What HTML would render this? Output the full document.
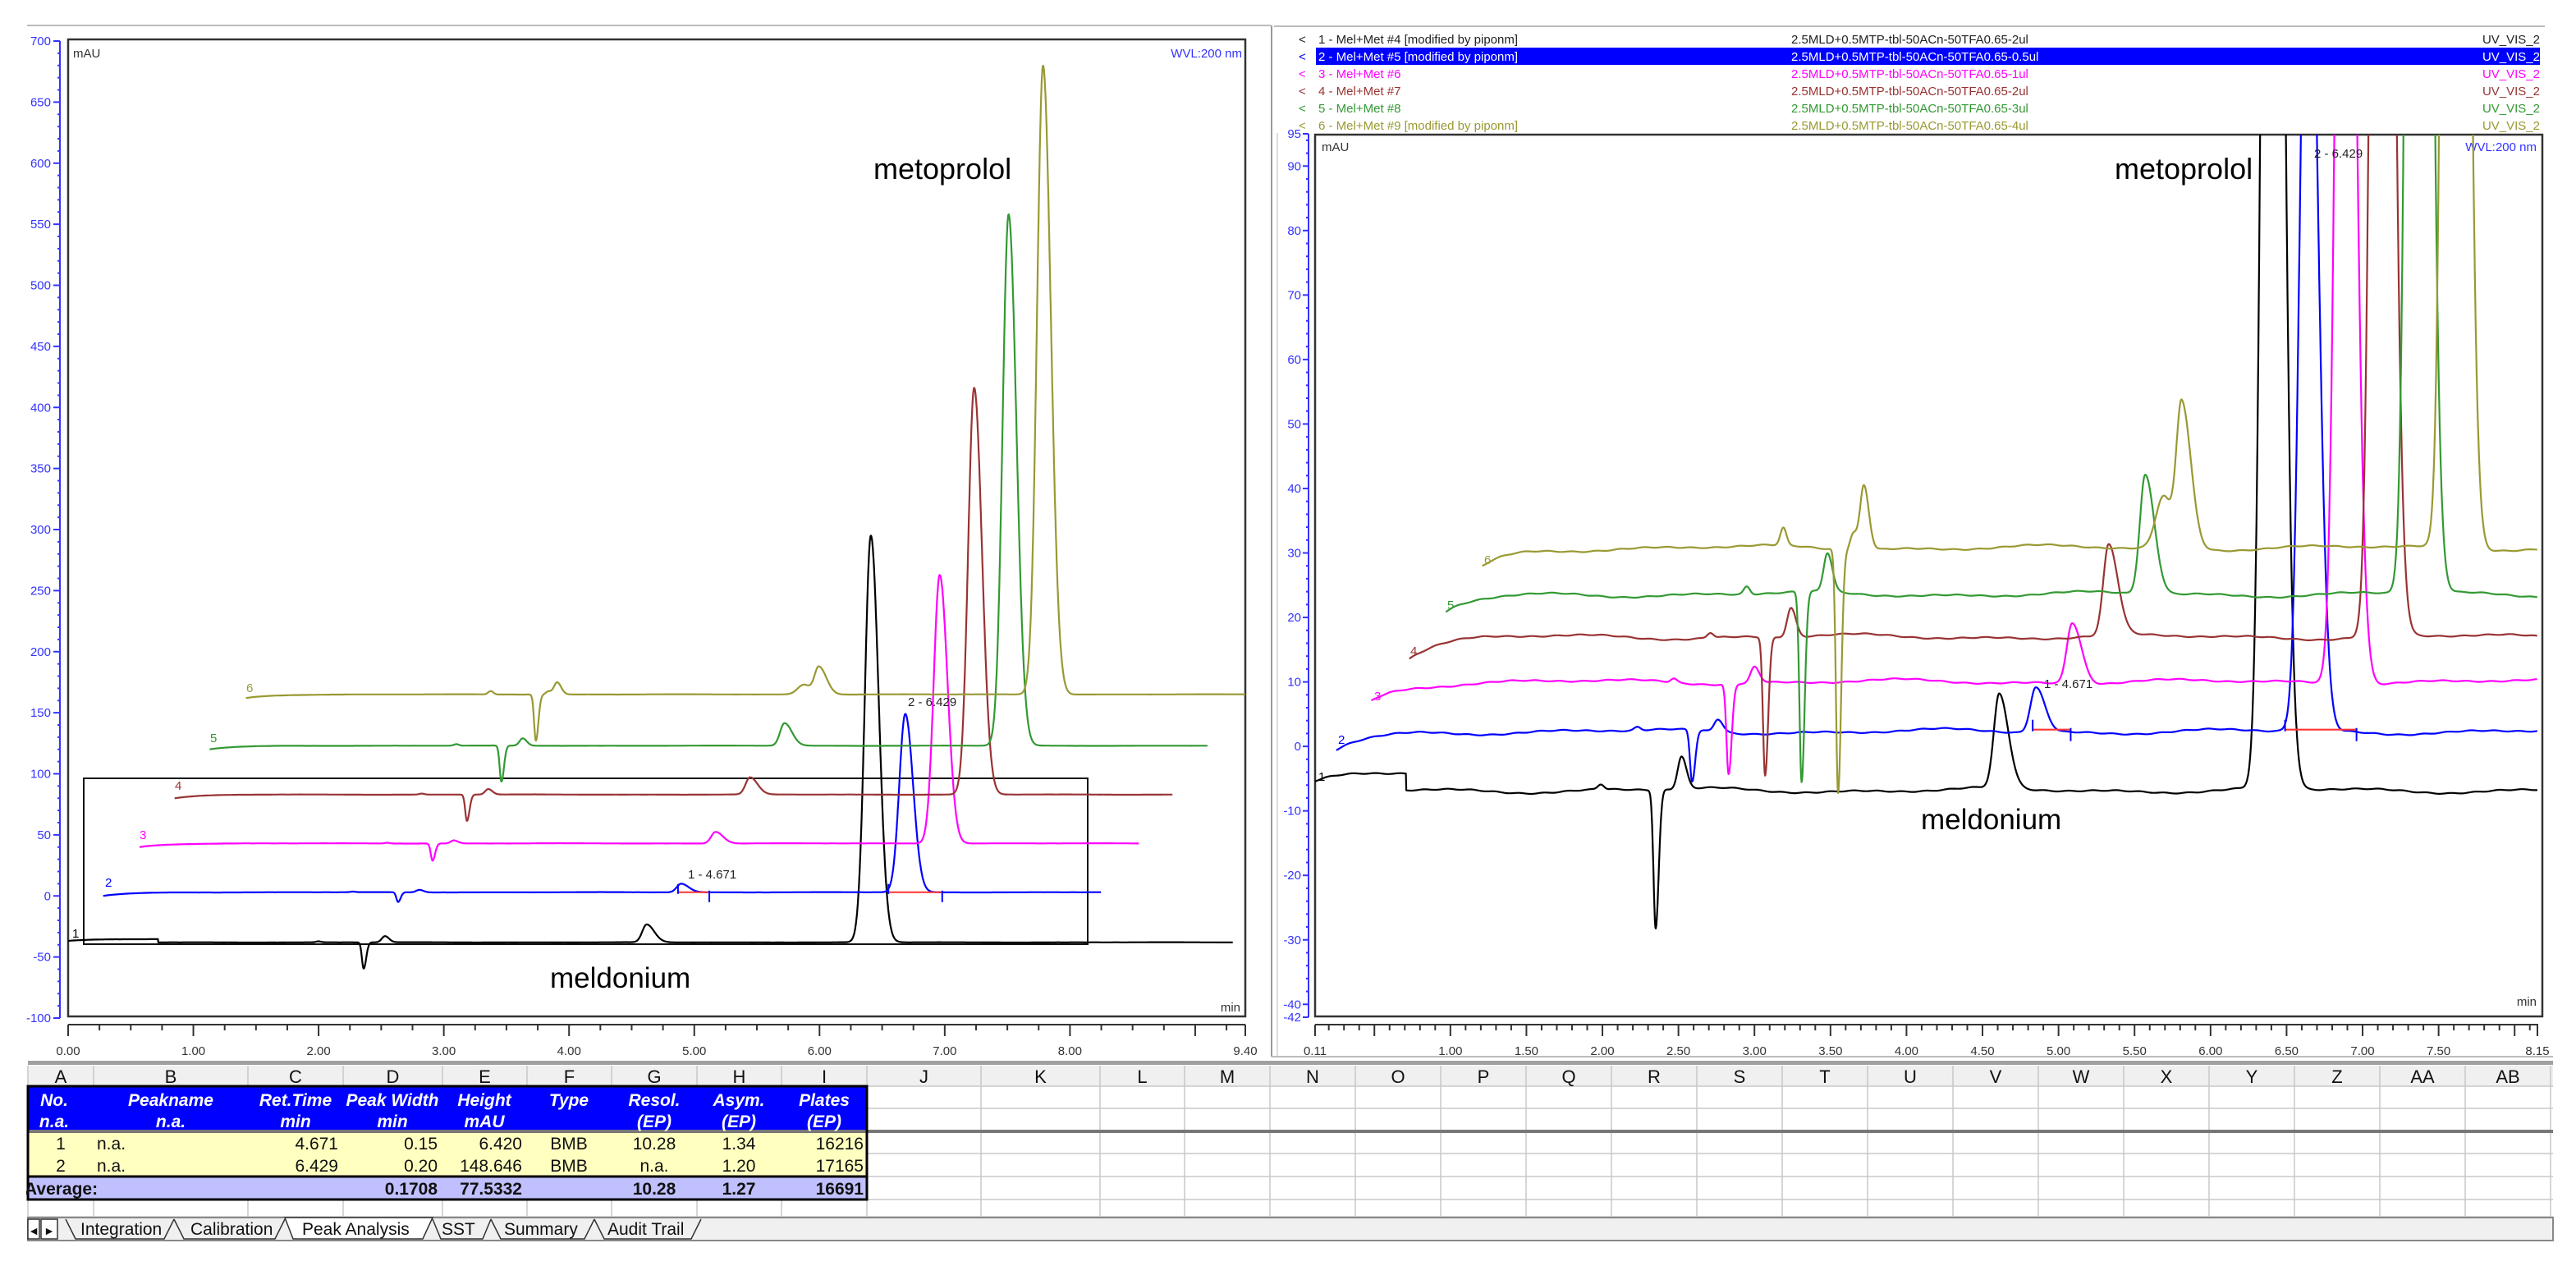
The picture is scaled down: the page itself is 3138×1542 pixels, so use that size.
<!DOCTYPE html>
<html><head><meta charset="utf-8">
<style>
html,body{margin:0;padding:0;background:#fff;}
svg{display:block;font-family:"Liberation Sans",sans-serif;}
.n{font-family:"Liberation Sans Narrow","Liberation Sans",sans-serif;}
</style></head>
<body>
<svg id="s" width="3138" height="1542" viewBox="0 0 3138 1542" xmlns="http://www.w3.org/2000/svg">
<rect width="3138" height="1542" fill="#fff"/>
<line x1="33" y1="31" x2="1548" y2="31" stroke="#bbb" stroke-width="2"/>
<line x1="1549" y1="31" x2="1549" y2="1287" stroke="#999" stroke-width="2"/>
<line x1="1556" y1="31" x2="1556" y2="1287" stroke="#ddd" stroke-width="2"/>
<line x1="1549" y1="1287" x2="3110" y2="1287" stroke="#bbb" stroke-width="2"/>
<rect x="83" y="48" width="1434" height="1190" fill="none" stroke="#333" stroke-width="2.5"/>
<text x="89" y="70" font-size="15" fill="#333">mAU</text>
<text x="1513" y="70" font-size="15" fill="#3333ff" text-anchor="end">WVL:200 nm</text>
<text x="1511" y="1232" font-size="15" fill="#333" text-anchor="end">min</text>
<line x1="73" y1="50" x2="73" y2="1240" stroke="#3333ff" stroke-width="2"/>
<g id="ly" font-size="15" fill="#3333ff" text-anchor="end"></g>
<line x1="83" y1="1248" x2="1517" y2="1248" stroke="#333" stroke-width="2"/>
<g id="lx" font-size="15" fill="#333" text-anchor="middle"></g>
<rect x="102" y="948" width="1223" height="202" fill="none" stroke="#111" stroke-width="2"/>
<g id="lt" fill="none" stroke-width="2.2" stroke-linejoin="round"></g>
<g font-size="15">
<text x="88" y="1142" fill="#000">1</text>
<text x="128" y="1080" fill="#0000ff">2</text>
<text x="170" y="1022" fill="#ff00ff">3</text>
<text x="213" y="962" fill="#993333">4</text>
<text x="256" y="904" fill="#339933">5</text>
<text x="300" y="843" fill="#999933">6</text>
<text x="838" y="1070" fill="#222">1 - 4.671</text>
<text x="1106" y="860" fill="#222">2 - 6.429</text>
</g>
<text x="1064" y="218" font-size="36" fill="#000">metoprolol</text>
<text x="670" y="1203" font-size="35" fill="#000">meldonium</text>

<rect x="1552" y="32" width="1545" height="130" fill="#fff"/>
<line x1="1552" y1="32" x2="3100" y2="32" stroke="#bbb" stroke-width="2"/>
<rect x="1603" y="58" width="1491" height="21" fill="#0000ff"/>
<g class="n" font-size="15">
<g fill="#222"><text x="1582" y="53">&lt;</text><text x="1606" y="53">1 - Mel+Met #4 [modified by piponm]</text><text x="2182" y="53">2.5MLD+0.5MTP-tbl-50ACn-50TFA0.65-2ul</text><text x="3094" y="53" text-anchor="end">UV_VIS_2</text></g>
<g fill="#fff"><text x="1582" y="74" fill="#0000ff">&lt;</text><text x="1606" y="74">2 - Mel+Met #5 [modified by piponm]</text><text x="2182" y="74">2.5MLD+0.5MTP-tbl-50ACn-50TFA0.65-0.5ul</text><text x="3094" y="74" text-anchor="end">UV_VIS_2</text></g>
<g fill="#ff00ff"><text x="1582" y="95">&lt;</text><text x="1606" y="95">3 - Mel+Met #6</text><text x="2182" y="95">2.5MLD+0.5MTP-tbl-50ACn-50TFA0.65-1ul</text><text x="3094" y="95" text-anchor="end">UV_VIS_2</text></g>
<g fill="#993333"><text x="1582" y="116">&lt;</text><text x="1606" y="116">4 - Mel+Met #7</text><text x="2182" y="116">2.5MLD+0.5MTP-tbl-50ACn-50TFA0.65-2ul</text><text x="3094" y="116" text-anchor="end">UV_VIS_2</text></g>
<g fill="#339933"><text x="1582" y="137">&lt;</text><text x="1606" y="137">5 - Mel+Met #8</text><text x="2182" y="137">2.5MLD+0.5MTP-tbl-50ACn-50TFA0.65-3ul</text><text x="3094" y="137" text-anchor="end">UV_VIS_2</text></g>
<g fill="#999933"><text x="1582" y="158">&lt;</text><text x="1606" y="158">6 - Mel+Met #9 [modified by piponm]</text><text x="2182" y="158">2.5MLD+0.5MTP-tbl-50ACn-50TFA0.65-4ul</text><text x="3094" y="158" text-anchor="end">UV_VIS_2</text></g>
</g>
<defs><clipPath id="rc"><rect x="1602" y="164" width="1495" height="1074"/></clipPath></defs>
<rect x="1602" y="164" width="1495" height="1074" fill="none" stroke="#333" stroke-width="2.5"/>
<text x="1610" y="184" font-size="15" fill="#333">mAU</text>
<text x="3090" y="184" font-size="15" fill="#3333ff" text-anchor="end">WVL:200 nm</text>
<text x="3090" y="1225" font-size="15" fill="#333" text-anchor="end">min</text>
<line x1="1594" y1="163" x2="1594" y2="1239" stroke="#3333ff" stroke-width="2"/>
<g id="ry" font-size="15" fill="#3333ff" text-anchor="end"></g>
<line x1="1602" y1="1248" x2="3092" y2="1248" stroke="#333" stroke-width="2"/>
<g id="rx" font-size="15" fill="#333" text-anchor="middle"></g>
<g id="rt" fill="none" stroke-width="2.2" stroke-linejoin="round" clip-path="url(#rc)"></g>
<g font-size="15">
<text x="1606" y="951" fill="#000">1</text>
<text x="1630" y="906" fill="#0000ff">2</text>
<text x="1674" y="853" fill="#ff00ff">3</text>
<text x="1718" y="798" fill="#993333">4</text>
<text x="1763" y="742" fill="#339933">5</text>
<text x="1808" y="687" fill="#999933">6</text>
<text x="2490" y="838" fill="#222">1 - 4.671</text>
<text x="2819" y="192" fill="#222">2 - 6.429</text>
</g>
<text x="2576" y="218" font-size="36" fill="#000">metoprolol</text>
<text x="2340" y="1010" font-size="35" fill="#000">meldonium</text>

<rect x="34" y="1292" width="3076" height="5" fill="#a0a0a0"/>
<rect x="34" y="1298" width="3076" height="25" fill="#f0f0f0"/>
<g id="grid" stroke="#c8c8c8" stroke-width="1.5"></g>
<rect x="34" y="1323" width="1022" height="55" fill="#0000ff"/>
<rect x="34" y="1378" width="1022" height="55" fill="#ffffc0"/>
<rect x="34" y="1433" width="1022" height="28" fill="#c0c0ff"/>
<line x1="34" y1="1378" x2="3110" y2="1378" stroke="#777" stroke-width="4"/>
<rect x="34" y="1323" width="1022" height="138" fill="none" stroke="#000" stroke-width="3"/>
<line x1="34" y1="1433" x2="1056" y2="1433" stroke="#000" stroke-width="3"/>
<g class="n" font-size="22" text-anchor="middle" fill="#111" id="hdr"></g>
<g class="n" font-size="21" font-style="italic" font-weight="bold" fill="#fff" text-anchor="middle">
<text x="66" y="1347">No.</text><text x="66" y="1373">n.a.</text>
<text x="208" y="1347">Peakname</text><text x="208" y="1373">n.a.</text>
<text x="360" y="1347">Ret.Time</text><text x="360" y="1373">min</text>
<text x="478" y="1347">Peak Width</text><text x="478" y="1373">min</text>
<text x="590" y="1347">Height</text><text x="590" y="1373">mAU</text>
<text x="693" y="1347">Type</text>
<text x="797" y="1347">Resol.</text><text x="797" y="1373">(EP)</text>
<text x="900" y="1347">Asym.</text><text x="900" y="1373">(EP)</text>
<text x="1004" y="1347">Plates</text><text x="1004" y="1373">(EP)</text>
</g>
<g class="n" font-size="21" fill="#111">
<text x="74" y="1400" text-anchor="middle">1</text><text x="118" y="1400">n.a.</text>
<text x="412" y="1400" text-anchor="end">4.671</text><text x="533" y="1400" text-anchor="end">0.15</text><text x="636" y="1400" text-anchor="end">6.420</text>
<text x="693" y="1400" text-anchor="middle">BMB</text><text x="797" y="1400" text-anchor="middle">10.28</text><text x="900" y="1400" text-anchor="middle">1.34</text><text x="1052" y="1400" text-anchor="end">16216</text>
<text x="74" y="1427" text-anchor="middle">2</text><text x="118" y="1427">n.a.</text>
<text x="412" y="1427" text-anchor="end">6.429</text><text x="533" y="1427" text-anchor="end">0.20</text><text x="636" y="1427" text-anchor="end">148.646</text>
<text x="693" y="1427" text-anchor="middle">BMB</text><text x="797" y="1427" text-anchor="middle">n.a.</text><text x="900" y="1427" text-anchor="middle">1.20</text><text x="1052" y="1427" text-anchor="end">17165</text>
</g>
<g class="n" font-size="21" font-weight="bold" fill="#111">
<text x="30" y="1455">Average:</text>
<text x="533" y="1455" text-anchor="end">0.1708</text><text x="636" y="1455" text-anchor="end">77.5332</text>
<text x="797" y="1455" text-anchor="middle">10.28</text><text x="900" y="1455" text-anchor="middle">1.27</text><text x="1052" y="1455" text-anchor="end">16691</text>
</g>
<rect x="0" y="1440" width="32" height="20" fill="#fff"/>
<rect x="34" y="1483" width="3076" height="28" fill="#f0f0f0" stroke="#888" stroke-width="2"/>
<g stroke="#333" stroke-width="1.5" fill="#f0f0f0">
<rect x="34" y="1485" width="14" height="24" fill="#fff"/>
<rect x="50" y="1485" width="20" height="24" fill="#fff"/>
<path d="M80 1485 L92 1509 L200 1509 L212 1485"/>
<path d="M212 1485 L224 1509 L335 1509 L347 1485"/>
<path d="M347 1483 L357 1509 L515 1509 L527 1483 Z" fill="#fff"/>
<path d="M527 1485 L537 1509 L588 1509 L598 1485"/>
<path d="M598 1485 L610 1509 L712 1509 L724 1485"/>
<path d="M724 1485 L736 1509 L842 1509 L854 1485"/>
</g>
<g font-size="21" class="n" fill="#111">
<text x="41" y="1504" font-size="14" text-anchor="middle">◄</text>
<text x="60" y="1504" font-size="14" text-anchor="middle">►</text>
<text x="98" y="1504">Integration</text>
<text x="232" y="1504">Calibration</text>
<text x="368" y="1504">Peak Analysis</text>
<text x="538" y="1504">SST</text>
<text x="614" y="1504">Summary</text>
<text x="740" y="1504">Audit Trail</text>
</g>
</svg>
<script>
(function(){
var NS="http://www.w3.org/2000/svg";
function el(p,tag,a,txt){var e=document.createElementNS(NS,tag);for(var k in a)e.setAttribute(k,a[k]);if(txt!=null)e.textContent=txt;p.appendChild(e);return e;}
function $(i){return document.getElementById(i);}
var LY=function(v){return 50+(700-v)*1.4875;};
var ly=$("ly");
for(var v=-100;v<=700;v+=10){var y=LY(v);var maj=(v%50===0);
 el(ly,"line",{x1:maj?65:70,y1:y,x2:73,y2:y,stroke:"#3333ff","stroke-width":2});
 if(maj)el(ly,"text",{x:62,y:y+5},String(v));}
var LX=function(t){return 83+t*152.55;};
var lx=$("lx");
for(var i=0;i<=37;i++){var t=i*0.25;var x=LX(t);var maj=(i%4===0);
 el(lx,"line",{x1:x,y1:1248,x2:x,y2:maj?1262:1255,stroke:"#333","stroke-width":2});}
for(var k=0;k<=8;k++)el(lx,"text",{x:LX(k),y:1285},k.toFixed(2));
el(lx,"line",{x1:1517,y1:1248,x2:1517,y2:1262,stroke:"#333","stroke-width":2});
el(lx,"text",{x:1517,y:1285},"9.40");
var RY=function(v){return 163+(95-v)*7.854;};
var ry=$("ry");
for(var v=-42;v<=95;v+=2){var y=RY(v);var maj=(v%10===0);
 el(ry,"line",{x1:maj?1587:1591,y1:y,x2:1594,y2:y,stroke:"#3333ff","stroke-width":2});
 if(maj)el(ry,"text",{x:1585,y:y+5},String(v));}
el(ry,"line",{x1:1587,y1:RY(95),x2:1594,y2:RY(95),stroke:"#3333ff","stroke-width":2});
el(ry,"text",{x:1585,y:RY(95)+5},"95");
el(ry,"line",{x1:1587,y1:RY(-42),x2:1594,y2:RY(-42),stroke:"#3333ff","stroke-width":2});
el(ry,"text",{x:1585,y:RY(-42)+5},"-42");
var RX=function(t){return 1602+(t-0.11)*185.2;};
var rx=$("rx");
for(var i=2;i<=81;i++){var t=i/10;if(t<0.11||t>8.15)continue;var x=RX(t);var maj=(i%5===0);
 el(rx,"line",{x1:x,y1:1248,x2:x,y2:maj?1262:1255,stroke:"#333","stroke-width":2});}
[[0.11,"0.11"],[8.15,"8.15"]].forEach(function(a){el(rx,"line",{x1:RX(a[0]),y1:1248,x2:RX(a[0]),y2:1262,stroke:"#333","stroke-width":2});el(rx,"text",{x:RX(a[0]),y:1285},a[1]);});
for(var k=2;k<=15;k++){el(rx,"text",{x:RX(k/2),y:1285},(k/2).toFixed(2));}
var cols=[34,114,302,418,539,642,745,849,952,1056,1195,1340,1443];
for(var c=1443+104;c<=3110;c+=104)cols.push(c);
var names="A B C D E F G H I J K L M N O P Q R S T U V W X Y Z AA AB".split(" ");
var g=$("grid"),h=$("hdr");
cols.forEach(function(x){el(g,"line",{x1:x,y1:1298,x2:x,y2:1482});});
[1323,1350,1405,1433,1461,1482].forEach(function(y){el(g,"line",{x1:34,y1:y,x2:3110,y2:y});});
for(var i=0;i<names.length&&i+1<cols.length;i++)el(h,"text",{x:(cols[i]+cols[i+1])/2,y:1319},names[i]);
var colors=["#000000","#0000ff","#ff00ff","#993333","#339933","#999933"];
var meld=[14.5,7,9.5,14,18.5,22.7],meto=[333,146,220,333,435,515],dip=[-21.5,-8,-14,-21.5,-29.5,-37.8],pk=[5,2,2.5,4.5,6,10],sm=[0.8,0.5,0.6,0.8,1.2,2.7];
function G(t,c,a,sl,sr){var s=t<c?sl:sr;var d=(t-c)/s;if(d*d>60)return 0;return a*Math.exp(-0.5*d*d);}
function sig(i,tb,t,start,noise){
 var v=G(tb,4.62,meld[i],0.035,0.06)+G(tb,6.41,meto[i],0.048,0.062)+G(tb,2.36,dip[i],0.014,0.02)+G(tb,2.53,pk[i],0.025,0.032)+G(tb,2.0,sm[i],0.02,0.02);
 if(i===5){v+=G(tb,2.46,2.5,0.02,0.025)+G(tb,4.5,8,0.05,0.05);}
 v+=(i===0?-1.4:-3)*Math.exp(-(t-start)/0.2);
 if(i===0){v+= (tb<0.72?2.6:0);}
 v+=noise*(0.3*Math.sin(t*3.1+i)+0.2*Math.sin(t*7.3+2*i)+0.07*Math.sin(t*40+i));
 return v;}
function draw(gid,X,Y,base,off,starts,ends,noise,tbase){
 var gg=$(gid);
 for(var i=0;i<6;i++){var d="";var st=starts[i],en=ends[i];
  for(var t=st;t<=en+1e-9;t+=0.003){var tb=t-off*i+tbase;var v=base[i]+sig(i,tb,t,st,noise);
   d+=(d?"L":"M")+X(t).toFixed(1)+" "+Y(v).toFixed(1);}
  el(gg,"path",{d:d,stroke:colors[i]});}
}
draw("lt",LX,LY,[-38,3,43,83,123,165],0.275,[0,0.28,0.57,0.85,1.13,1.42],[9.3,8.25,8.55,8.82,9.1,9.4],0.3,0);
draw("rt",RX,RY,[-6.8,2.3,10,17,23.6,30.8],0.24,[0.11,0.25,0.48,0.73,0.97,1.21],[8.15,8.15,8.15,8.15,8.15,8.15],1,0.01);
var lt=$("lt"),rt=$("rt");
[[4.87,5.12],[6.55,6.98]].forEach(function(a){var y=LY(3);el(lt,"line",{x1:LX(a[0]),y1:y,x2:LX(a[1]),y2:y,stroke:"#ff3333","stroke-width":2});
 el(lt,"line",{x1:LX(a[0]),y1:y-10,x2:LX(a[0]),y2:y+2,stroke:"#0000ff","stroke-width":2});el(lt,"line",{x1:LX(a[1]),y1:y-2,x2:LX(a[1]),y2:y+12,stroke:"#0000ff","stroke-width":2});});
[[4.83,5.08],[6.49,6.96]].forEach(function(a){var y=RY(2.6);el(rt,"line",{x1:RX(a[0]),y1:y,x2:RX(a[1]),y2:y,stroke:"#ff3333","stroke-width":2.2});
 el(rt,"line",{x1:RX(a[0]),y1:y-12,x2:RX(a[0]),y2:y+2,stroke:"#0000ff","stroke-width":2});el(rt,"line",{x1:RX(a[1]),y1:y-2,x2:RX(a[1]),y2:y+14,stroke:"#0000ff","stroke-width":2});});
})();
</script>
</body></html>
